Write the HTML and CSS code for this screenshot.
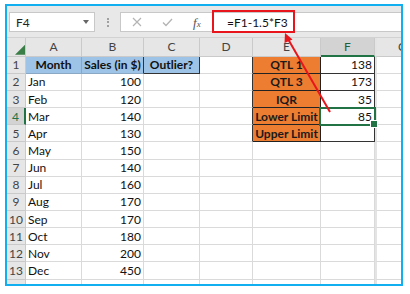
FILE: index.html
```html
<!DOCTYPE html>
<html>
<head>
<meta charset="utf-8">
<link rel="stylesheet" href="styles.css">
</head>
<body>
<div class="frame">
  <div class="toolbar">
    <div class="namebox"><span class="name">F4</span><span class="caret"></span></div>
    <div class="grip"></div>
    <div class="fbar">
      <div class="tools">
        <svg class="ico-x" width="10" height="10" viewBox="0 0 10 10"><path d="M1 1 L9 9 M9 1 L1 9" stroke="#b4b4b4" stroke-width="1.2" fill="none"/></svg>
        <svg class="ico-ok" width="11" height="9" viewBox="0 0 11 9"><path d="M1 4.5 L4 7.5 L10 1" stroke="#b4b4b4" stroke-width="1.3" fill="none"/></svg>
        <span class="fx">f<span class="fxx">x</span></span>
      </div>
      <div class="formula">=F1-1.5*F3</div>
    </div>
  </div>
  <div class="sheet">
    <div class="hd corner"></div>
    <div class="hd">A</div><div class="hd">B</div><div class="hd">C</div><div class="hd">D</div><div class="hd">E</div><div class="hd hd-sel">F</div><div class="hd g">G</div>

    <div class="rh">1</div><div class="c ttl">Month</div><div class="c ttl bdr-r">Sales (in $)</div><div class="c ttl out">Outlier?</div><div class="c bdr-r"></div><div class="c lab">QTL 1</div><div class="c num res">138</div><div class="c g"></div>
    <div class="rh">2</div><div class="c">Jan</div><div class="c num">100</div><div class="c"></div><div class="c bdr-r"></div><div class="c lab">QTL 3</div><div class="c num res">173</div><div class="c g"></div>
    <div class="rh">3</div><div class="c">Feb</div><div class="c num">120</div><div class="c"></div><div class="c bdr-r"></div><div class="c lab">IQR</div><div class="c num res">35</div><div class="c g"></div>
    <div class="rh rh-sel">4</div><div class="c">Mar</div><div class="c num">140</div><div class="c"></div><div class="c bdr-r"></div><div class="c lab">Lower Limit</div><div class="c num res sel">85</div><div class="c g"></div>
    <div class="rh">5</div><div class="c">Apr</div><div class="c num">130</div><div class="c"></div><div class="c bdr-r"></div><div class="c lab">Upper Limit</div><div class="c num res"></div><div class="c g"></div>
    <div class="rh">6</div><div class="c">May</div><div class="c num">150</div><div class="c"></div><div class="c"></div><div class="c"></div><div class="c"></div><div class="c g"></div>
    <div class="rh">7</div><div class="c">Jun</div><div class="c num">140</div><div class="c"></div><div class="c"></div><div class="c"></div><div class="c"></div><div class="c g"></div>
    <div class="rh">8</div><div class="c">Jul</div><div class="c num">160</div><div class="c"></div><div class="c"></div><div class="c"></div><div class="c"></div><div class="c g"></div>
    <div class="rh">9</div><div class="c">Aug</div><div class="c num">170</div><div class="c"></div><div class="c"></div><div class="c"></div><div class="c"></div><div class="c g"></div>
    <div class="rh">10</div><div class="c">Sep</div><div class="c num">170</div><div class="c"></div><div class="c"></div><div class="c"></div><div class="c"></div><div class="c g"></div>
    <div class="rh">11</div><div class="c">Oct</div><div class="c num">180</div><div class="c"></div><div class="c"></div><div class="c"></div><div class="c"></div><div class="c g"></div>
    <div class="rh">12</div><div class="c">Nov</div><div class="c num">200</div><div class="c"></div><div class="c"></div><div class="c"></div><div class="c"></div><div class="c g"></div>
    <div class="rh">13</div><div class="c">Dec</div><div class="c num">450</div><div class="c"></div><div class="c"></div><div class="c"></div><div class="c"></div><div class="c g"></div>
    <div class="rh"></div><div class="c"></div><div class="c"></div><div class="c"></div><div class="c"></div><div class="c"></div><div class="c"></div><div class="c g"></div>
  </div>
  <div class="callout"></div>
  <svg class="arrow" width="400" height="130" viewBox="0 0 400 130">
    <line x1="323" y1="106" x2="281" y2="33" stroke="#e8161c" stroke-width="2"/>
    <polygon points="278,27 285.5,33.5 277.5,37" fill="#e8161c"/>
  </svg>
</div>
</body>
</html>
```

FILE: styles.css
```css
* { box-sizing: border-box; }
html, body { margin: 0; padding: 0; background: #fff; }
body { font-family: "Lato", "Open Sans", sans-serif; }

.frame {
  position: relative;
  margin: 4px 0 0 5px;
  width: 398px;
  height: 282px;
  border: 2px solid #12aff0;
  background: #fff;
  overflow: hidden;
}

.toolbar {
  display: flex;
  align-items: center;
  height: 31px;
  padding: 0 0 0 2px;
  background: #e8e8e8;
}

.namebox {
  display: flex;
  align-items: center;
  justify-content: space-between;
  width: 86px;
  height: 20px;
  margin-top: 1px;
  padding: 0 5px 0 6px;
  background: #fff;
  border: 1px solid #c8c8c8;
  font-size: 12px;
  color: #222;
}
.caret {
  width: 0; height: 0;
  border-left: 3.5px solid transparent;
  border-right: 3.5px solid transparent;
  border-top: 4px solid #666;
}

.grip {
  width: 2px;
  height: 9px;
  margin: 1px 0 0 12px;
  border-left: 2px dotted #a0a0a0;
}

.fbar {
  display: flex;
  flex: 1;
  height: 20px;
  margin: 1px 0 0 11px;
  background: #fff;
  border: 1px solid #c8c8c8;
  border-right: none;
}
.tools {
  display: flex;
  align-items: center;
  width: 92px;
  padding-left: 11px;
  border-right: 1px solid #d6d6d6;
}
.ico-x { margin-right: 20px; }
.ico-ok { margin-right: 20px; }
.fx {
  font-family: "Liberation Serif", serif;
  font-style: italic;
  font-size: 13px;
  color: #555;
  line-height: 1;
}
.fxx { font-size: 9px; }
.formula {
  display: flex;
  align-items: center;
  padding-left: 14px;
  font-size: 12px;
  color: #111;
}

.sheet {
  display: grid;
  grid-template-columns: 19px 56px 62px 56px 53px 68px 54px 52px;
  grid-template-rows: 18.7px repeat(14, 17.15px);
  border-top: 1px solid #d2d2d2;
  font-size: 12px;
  color: #111;
}

.hd, .rh, .c {
  display: flex;
  align-items: center;
  white-space: nowrap;
  overflow: hidden;
  border-right: 1px solid #dadada;
  border-bottom: 1px solid #dadada;
}

.hd {
  justify-content: center;
  background: #e6e6e6;
  color: #444;
  border-color: #cacaca;
}
.hd-sel {
  background: #d3d3d3;
  color: #1f5f3a;
  border-bottom: 2px solid #217346;
}
.corner { position: relative; }
.corner::after {
  content: "";
  position: absolute;
  right: 0;
  bottom: 1px;
  width: 10px;
  height: 10px;
  background: #3b7d46;
  clip-path: polygon(100% 0, 100% 100%, 0 100%);
}

.rh {
  justify-content: center;
  background: #e6e6e6;
  color: #444;
  border-color: #cacaca;
}
.rh-sel {
  background: #d3d3d3;
  color: #217346;
  border-right: 2px solid #217346;
}

.c { padding: 0 2px; }
.num { justify-content: flex-end; padding-right: 2px; }

.ttl {
  justify-content: center;
  background: #9dc3e6;
  font-weight: 700;
  border-bottom-color: #8aa7c4;
  border-right-color: #8aa7c4;
}
.bdr-r { border-right-color: #333; }
.out { border-right-color: #333; border-bottom-color: #333; }

.lab {
  justify-content: center;
  background: #ed7d31;
  font-weight: 700;
  color: #1a1a1a;
  border-right-color: #222;
  border-bottom-color: #222;
}
.res {
  border-right-color: #333;
  border-bottom-color: #333;
}

.g { border-left: 2px solid #e4e4e4; }
.hd.g { border-left: 2px solid #e4e4e4; justify-content: flex-start; padding-left: 21px; }

.sel { position: relative; overflow: visible; }
.sel::after {
  content: "";
  position: absolute;
  top: -1px;
  left: -2px;
  right: -2px;
  bottom: -2px;
  border: 2px solid #217346;
}
.sel::before {
  content: "";
  position: absolute;
  right: -4px;
  bottom: -4px;
  width: 6px;
  height: 6px;
  background: #217346;
  border: 1px solid #fff;
  z-index: 2;
}

.callout {
  position: absolute;
  left: 205px;
  top: 4px;
  width: 83px;
  height: 23px;
  border: 2px solid #e8161c;
}
.arrow {
  position: absolute;
  left: 0;
  top: 0;
}
```
